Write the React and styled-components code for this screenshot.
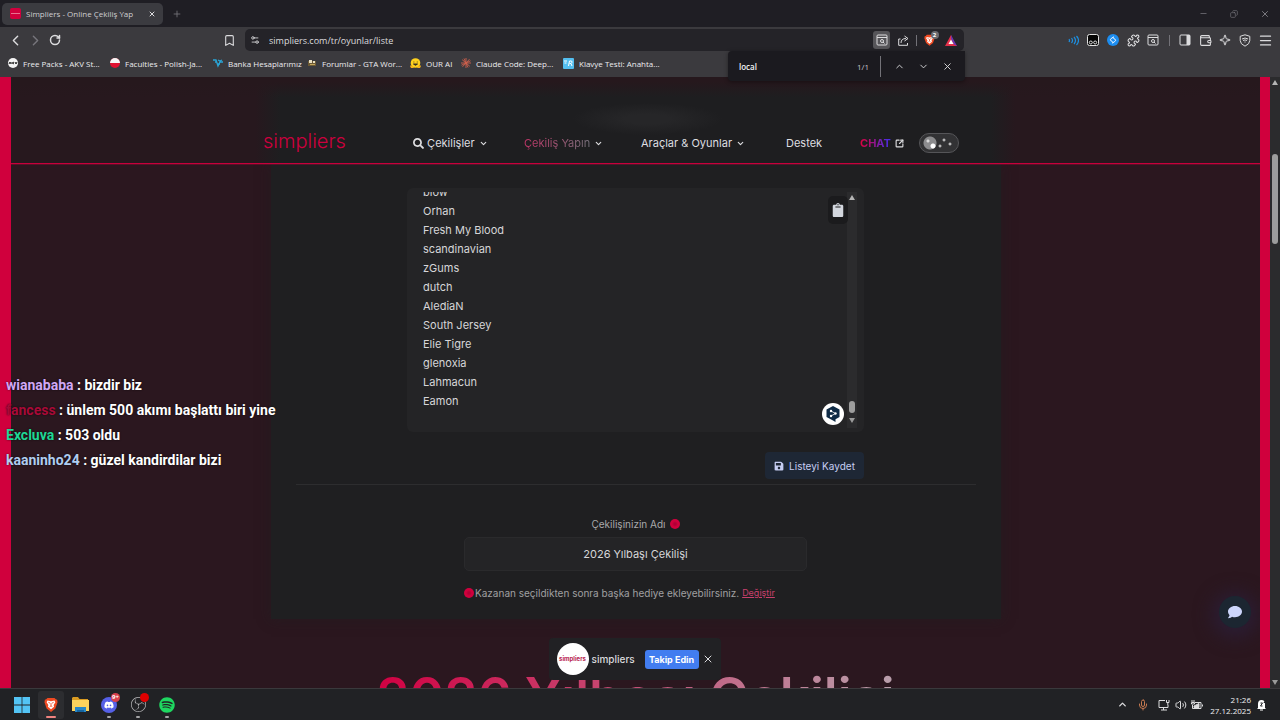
import React, { useLayoutEffect, useRef } from 'react';
import styled, { createGlobalStyle } from 'styled-components';
import {
  ChevronLeft, ChevronRight, ChevronUp, ChevronDown, RotateCw, Bookmark, Plus, X, Minus, Copy,
  Settings2, Puzzle, Wallet, Sparkle, Menu, Mic, Volume2, SquareArrowOutUpRight
} from 'lucide-react';
import { FaSearch, FaSave, FaClipboard, FaComment, FaDiscord, FaSpotify } from 'react-icons/fa';
import { SiObsstudio } from 'react-icons/si';

const GlobalStyle = createGlobalStyle`
  * {
    box-sizing: border-box;
  }
  body {
    margin: 0;
    background: #2b171f;
    font-family: Inter, 'Liberation Sans', sans-serif;
    overflow: hidden;
  }
  button, input, textarea {
    border: 0;
    margin: 0;
    padding: 0;
    background: none;
    color: inherit;
    font: inherit;
    outline: none;
  }
  svg {
    flex: none;
    display: block;
  }
`;

const Desktop = styled.div`
  position: relative;
  display: flex;
  flex-direction: column;
  height: 100vh;
`;

/* browser */

const Browser = styled.header`
  position: relative;
  z-index: 3;
  background: #3b3a3e;
  color: #ececee;
  font-family: 'Open Sans', 'Noto Sans', sans-serif;
  font-size: 8px;
`;

const TabStrip = styled.div`
  display: flex;
  align-items: center;
  height: 27px;
  padding: 0 8px 0 2px;
  background: #1f1e24;
`;

const Tab = styled.div`
  display: flex;
  align-items: center;
  gap: 5px;
  width: 161px;
  height: 22px;
  padding: 0 6px 0 8px;
  border-radius: 5px;
  background: #3b3b40;
  white-space: nowrap;
  span {
    flex: 1;
    color: #cfcfd2;
  }
`;

const Favicon = styled.i`
  display: flex;
  align-items: center;
  justify-content: center;
  width: 11px;
  height: 11px;
  border-radius: 2px;
  background: #d0003d;
  &::after {
    content: '';
    width: 9px;
    height: 1px;
    background: #e8708f;
  }
`;

const IconButton = styled.button`
  display: flex;
  align-items: center;
  justify-content: center;
  flex: none;
  width: ${({ $w }) => $w || 20}px;
  height: 18px;
  border-radius: 3px;
  color: ${({ $color }) => $color || '#dcdcde'};
  background: ${({ $active }) => ($active ? '#565559' : 'transparent')};
`;

const WindowButtons = styled.div`
  display: flex;
  gap: 11px;
  margin-left: auto;
  margin-right: -3px;
`;

const Toolbar = styled.div`
  display: flex;
  align-items: center;
  height: 25px;
  padding: 1px 5px 0;
`;

const BookmarkSlot = styled.div`
  flex: 1;
  display: flex;
  justify-content: flex-end;
  max-width: 180px;
  padding-right: 6px;
`;

const AddressBar = styled.label`
  display: flex;
  align-items: center;
  flex: 1;
  max-width: 719px;
  height: 22px;
  padding: 0 3px 0 0;
  border-radius: 5px;
  background: #242328;
  input {
    flex: 1;
    padding-left: 4px;
    color: #dcdcde;
    font-size: 9px;
  }
`;

const Divider = styled.i`
  width: 1px;
  height: ${({ $h }) => $h || 11}px;
  background: #737278;
`;

const Shield = styled.span`
  position: relative;
  b {
    position: absolute;
    left: 7px;
    top: -3px;
    width: 8px;
    height: 8px;
    border-radius: 4px;
    background: #6b6b70;
    color: #fff;
    font-size: 6px;
    line-height: 8px;
    text-align: center;
  }
`;

const Extensions = styled.div`
  display: flex;
  align-items: center;
  margin-left: auto;
`;

const Bookmarks = styled.nav`
  display: flex;
  align-items: center;
  height: 25px;
  padding: 0 8px 3px;
`;

const BookmarkLink = styled.a`
  display: flex;
  align-items: center;
  gap: 5px;
  width: ${({ $w }) => $w}px;
  color: inherit;
  text-decoration: none;
  white-space: nowrap;
`;

const FindBar = styled.div`
  position: absolute;
  left: 728px;
  top: 51px;
  display: flex;
  align-items: center;
  width: 237px;
  height: 30px;
  padding: 0 6px 0 11px;
  border-radius: 4px 0 4px 4px;
  background: #1b1a1f;
  box-shadow: 0 1px 4px rgba(0, 0, 0, 0.4);
  input {
    flex: 1;
    min-width: 0;
    color: #f2f2f4;
    font-weight: 600;
  }
  span {
    margin-right: 11px;
    color: #c4c4c8;
  }
  ${Divider} {
    margin-right: 6px;
  }
`;

/* page */

const Viewport = styled.div`
  position: relative;
  display: flex;
  flex: 1;
  min-height: 0;
`;

const Page = styled.div`
  position: relative;
  display: flex;
  flex-direction: column;
  align-items: center;
  flex: 1;
  min-width: 0;
  overflow: hidden;
  border: solid #d0003d;
  border-width: 0 10px 0 11px;
  background: #2b171f;
`;

const SiteHeader = styled.header`
  position: relative;
  z-index: 1;
  display: flex;
  justify-content: center;
  align-items: flex-end;
  align-self: stretch;
  flex: none;
  height: 87px;
  padding-bottom: 9px;
  border-bottom: 1px solid #c8003c;
  box-shadow: 0 1px 0 rgba(208, 0, 61, 0.3);
  background:
    radial-gradient(ellipse 75px 16px at calc(50% + 12px) 42px, #262628 30%, transparent),
    linear-gradient(to bottom, #26181d 5px, transparent 20px),
    linear-gradient(to right, #27181e calc(50% - 380px), #1e1e20 calc(50% - 355px), #1e1e20 calc(50% + 355px), #27181e calc(50% + 380px));
`;

const Nav = styled.nav`
  display: grid;
  grid-template-columns: 150px 111px 117px 145px 74px 59px 40px;
  align-items: center;
  width: 745px;
  height: 22px;
  color: #dedee0;
  font-size: 11px;
  white-space: nowrap;
  a {
    display: flex;
    align-items: center;
    color: inherit;
    text-decoration: none;
  }
  a svg:last-child {
    margin-left: 4px;
  }
`;

const Logo = styled.span`
  padding-bottom: 3px;
  color: #cc003e;
  font-size: 20px;
  line-height: 19px;
  font-weight: 300;
`;

const GradientText = styled.span`
  background: linear-gradient(to right, ${({ $from }) => $from}, ${({ $to }) => $to});
  background-clip: text;
  color: transparent;
  font-weight: ${({ $bold }) => ($bold ? 700 : 400)};
`;

const ThemeSwitch = styled.input.attrs({ type: 'checkbox', 'aria-label': 'Karanlık tema' })`
  appearance: none;
  width: 40px;
  height: 20px;
  border: 1px solid #555558;
  border-radius: 10px;
  background:
    radial-gradient(circle at 13px 12px, #fff 2px, transparent 3px),
    radial-gradient(circle at 8px 7px, #d8d8d8 1px, transparent 2px),
    radial-gradient(circle at 10px 9px, #8c8c8e 6px, transparent 7px),
    radial-gradient(circle at 20px 12px, #fff 0, transparent 2px),
    radial-gradient(circle at 24px 6px, #fff 0, transparent 2px),
    radial-gradient(circle at 30px 10px, #fff 0, transparent 2px),
    #323234;
`;

const Card = styled.main`
  display: flex;
  flex-direction: column;
  align-items: center;
  flex: none;
  width: 100%;
  max-width: 730px;
  padding: 24px 25px 18px;
  background: #1f1f21;
  box-shadow: 0 0 12px rgba(31, 31, 33, 0.5);
`;

const ListBox = styled.div`
  position: relative;
  display: flex;
  width: 100%;
  max-width: 457px;
  padding: 4px 7px 4px 16px;
  border-radius: 6px;
  background: #242426;
`;

const Names = styled.textarea`
  flex: 1;
  height: 236px;
  padding-bottom: 17px;
  resize: none;
  overflow: hidden;
  color: #d6d6d8;
  font-size: 11px;
  line-height: 19px;
`;

const Track = styled.div`
  display: flex;
  flex-direction: column;
  align-items: center;
  width: 10px;
  padding: 3px 0;
  background: #2b2b2d;
  &::before, &::after {
    content: '';
    border: 3px solid transparent;
  }
  &::before {
    border-top: 0;
    border-bottom: 5px solid #b4b4b4;
  }
  &::after {
    border-bottom: 0;
    border-top: 5px solid #9a9a9a;
  }
`;

const ListTrack = styled(Track)`
  justify-content: flex-end;
  padding-bottom: 5px;
  &::before {
    margin-bottom: auto;
  }
  &::after {
    margin-top: 5px;
  }
`;

const PageTrack = styled(Track)`
  &::after {
    margin-top: auto;
  }
`;

const Thumb = styled.i`
  width: 6px;
  height: ${({ $h }) => $h}px;
  margin-top: ${({ $offset }) => $offset || 0}px;
  border-radius: 3px;
  background: #9d9d9d;
`;

const CopyButton = styled.button`
  position: absolute;
  right: 16px;
  top: 8px;
  display: flex;
  align-items: center;
  justify-content: center;
  width: 20px;
  height: 28px;
  border-radius: 5px;
  background: #1b1b1d;
  color: #d3d7de;
`;

const Translate = styled.button`
  position: absolute;
  right: 20px;
  bottom: 7px;
  width: 22px;
  height: 22px;
  border-radius: 11px;
  background: #fff;
  display: grid;
  place-items: center;
`;

const SaveButton = styled.button`
  display: flex;
  align-items: center;
  justify-content: center;
  gap: 5px;
  width: 99px;
  height: 27px;
  border-radius: 4px;
  background: #1e2735;
  color: #c6cdf2;
  font-size: 10px;
`;

const SaveRow = styled.div`
  display: flex;
  justify-content: flex-end;
  width: 100%;
  max-width: 457px;
  margin-top: 20px;
`;

const Rule = styled.hr`
  align-self: stretch;
  height: 1px;
  margin: 5px 0 31px;
  border: 0;
  background: #2d2d2f;
`;

const Field = styled.label`
  display: flex;
  flex-direction: column;
  width: 100%;
  max-width: 343px;
  color: #a9a9ab;
  font-size: 10px;
  line-height: 16px;
  span {
    display: flex;
    align-items: center;
    justify-content: center;
    gap: 4px;
  }
  input {
    height: 34px;
    margin-top: 5px;
    border: 1px solid #2a2a2c;
    border-radius: 5px;
    background: #242426;
    color: #d6d6d8;
    font-size: 11px;
    text-align: center;
  }
`;

const Dot = styled.i`
  width: 10px;
  height: 10px;
  border-radius: 5px;
  background: radial-gradient(circle, #b00035 1px, #d0003d 3px);
`;

const Note = styled.p`
  display: flex;
  align-items: center;
  gap: 1px;
  width: 100%;
  max-width: 343px;
  margin: 14px 0 0;
  color: #a0a0a2;
  font-size: 10px;
  line-height: 16px;
  white-space: nowrap;
  a {
    margin-left: 2px;
    color: #c8406d;
    font-size: 9px;
  }
`;

const Title = styled.h1`
  flex: none;
  margin: 48px 0 0;
  background: linear-gradient(to right, #d10042, #b9a0ac);
  background-clip: text;
  color: transparent;
  font-size: 53px;
  line-height: 60px;
  font-weight: 600;
  white-space: nowrap;
`;

const Toast = styled.aside`
  position: absolute;
  left: 50%;
  bottom: 8px;
  display: flex;
  align-items: center;
  width: 172px;
  height: 42px;
  margin-left: -87px;
  padding: 0 4px 0 8px;
  border-radius: 4px;
  background: #212124;
  color: #dadadc;
  font-size: 10px;
  font-weight: 500;
  > span {
    flex: 1;
    padding-left: 3px;
  }
`;

const Avatar = styled.b`
  width: 32px;
  height: 32px;
  border-radius: 16px;
  background: #fff;
  color: #b81c50;
  font-size: 6px;
  line-height: 32px;
  text-align: center;
`;

const FollowButton = styled.button`
  width: 54px;
  height: 19px;
  border-radius: 3px;
  background: #427df0;
  color: #fff;
  font-size: 9px;
  font-weight: 700;
  white-space: nowrap;
`;

const SupportButton = styled.button`
  position: absolute;
  right: 9px;
  bottom: 60px;
  display: grid;
  place-items: center;
  width: 32px;
  height: 32px;
  border-radius: 16px;
  background: #1c2631;
  color: #cdd5fb;
  box-shadow: 0 3px 18px 7px #2b1d33;
`;

const StreamChat = styled.ul`
  position: absolute;
  left: 6px;
  top: 296px;
  z-index: 2;
  margin: 0;
  padding: 0;
  list-style: none;
  color: #fff;
  font-family: Roboto, sans-serif;
  font-size: 14px;
  font-weight: 700;
  line-height: 25px;
  text-shadow: 0 0 2px rgba(0, 0, 0, 0.7);
  white-space: nowrap;
`;

const Nick = styled.span`
  color: ${({ $color }) => $color};
`;

/* taskbar */

const Taskbar = styled.footer`
  display: flex;
  align-items: center;
  flex: none;
  height: 32px;
  padding: 0 12px 0 9px;
  border-top: 1px solid #3a393c;
  background: #212225;
  color: #f0f0f2;
  font-family: 'Open Sans', 'Noto Sans', sans-serif;
  font-size: 8px;
`;

const AppButton = styled.button`
  position: relative;
  display: grid;
  place-items: center;
  width: 26px;
  height: 28px;
  margin-right: 3px;
  border-radius: 3px;
  color: ${({ $color }) => $color};
  background: ${({ $active }) => ($active ? '#2c2d30' : 'transparent')};
  &::after {
    content: '';
    position: absolute;
    bottom: 1px;
    width: ${({ $active }) => ($active ? 10 : 4)}px;
    height: 2px;
    border-radius: 1px;
    background: ${({ $active, $running }) => ($active ? '#f0837f' : $running ? '#a5a5a7' : 'transparent')};
  }
`;

const Badge = styled.b`
  position: absolute;
  right: 2px;
  top: 2px;
  width: 9px;
  height: 9px;
  border-radius: 5px;
  background: ${({ $color }) => $color};
  color: #fff;
  font-size: 6px;
  line-height: 9px;
`;

const Tray = styled.div`
  display: flex;
  align-items: center;
  margin-left: auto;
`;

const Clock = styled.time`
  width: 44px;
  margin: 0 3px 0 0;
  line-height: 11px;
  text-align: right;
`;

const names = [
  'blow', 'Orhan', 'Fresh My Blood', 'scandinavian', 'zGums', 'dutch', 'AlediaN',
  'South Jersey', 'Elie Tigre', 'glenoxia', 'Lahmacun', 'Eamon'
];

const messages = [
  { nick: 'wianababa', color: '#d0a8f5', text: 'bizdir biz' },
  { nick: 'fancess', color: '#a80a38', text: 'ünlem 500 akımı başlattı biri yine' },
  { nick: 'Excluva', color: '#1fd795', text: '503 oldu' },
  { nick: 'kaaninho24', color: '#b0cdf0', text: 'güzel kandirdilar bizi' }
];

const AkvIcon = () => (
  <svg width="10" height="10" viewBox="0 0 10 10">
    <circle cx="5" cy="5" r="5" fill="#f4f4f4" />
    <path d="M1 6l1-2 1 2M4 4v2M6 4L4.500 5 6 6M7 4l1 2 1-2" stroke="#222" fill="none" />
  </svg>
);

const PolishIcon = () => (
  <svg width="10" height="10" viewBox="0 0 10 10">
    <circle cx="5" cy="5" r="5" fill="#e01030" />
    <path d="M0 5a5 5 0 0 1 10 0z" fill="#f6f6f6" />
  </svg>
);

const BankIcon = () => (
  <svg width="10" height="10" viewBox="0 0 10 10" stroke="#2aa5d6" strokeWidth="1.300" fill="none">
    <path d="M0 2h3l2 6 2-4h3M2 4h2M5 2l2 1 2-1M4 6h3" />
  </svg>
);

const GtaIcon = () => (
  <svg width="10" height="10" viewBox="0 0 10 10">
    <path d="M1 3h8v5H1z" fill="#6d5a35" />
    <path d="M2 2h3v3H2zM6 3h2v2H6z" fill="#e9dfc2" />
    <path d="M3 6h5v1H3z" fill="#c3a55c" />
  </svg>
);

const HugIcon = () => (
  <svg width="11" height="11" viewBox="0 0 11 11">
    <circle cx="5.500" cy="5" r="4.800" fill="#ffd21e" />
    <path d="M0 8c1-2 3 0 4 2H1zM11 8c-1-2-3 0-4 2h3z" fill="#f5b21a" />
    <path d="M3.500 4h.8M6.800 4h.8M3.500 6q2 2.500 4 0z" stroke="#3a3320" fill="#3a3320" />
  </svg>
);

const ClaudeIcon = () => (
  <svg width="10" height="10" viewBox="0 0 10 10" stroke="#d0604c" strokeWidth=".9">
    <path d="M5 0v10M0 5h10M1.200 1.700l7.600 6.600M8.500 1.200l-7 7.600M3 .5l4 9M.5 7.200l9-4.400" />
  </svg>
);

const KeyboardIcon = () => (
  <svg width="11" height="11" viewBox="0 0 11 11">
    <rect width="11" height="11" rx="1" fill="#54bff0" />
    <path d="M1 3h3M1.500 5h2M5.500 8l1-5h2q1.500 1-.5 2.500H6.500M8 5.500L9 8" stroke="#fff" fill="none" />
  </svg>
);

const PageSearchIcon = () => (
  <svg width="12" height="12" viewBox="0 0 12 12" fill="none" stroke="currentColor">
    <rect x="1" y="1" width="10" height="10" rx="1" />
    <path d="M1 3.500h10M7 8l1.500 1.500" />
    <circle cx="6" cy="7" r="1.500" />
  </svg>
);

const ShareIcon = () => (
  <svg width="11" height="11" viewBox="0 0 11 11" fill="none" stroke="currentColor">
    <path d="M2.500 4H.7v6.300h8.800V8M3 8q0-4.500 5-4.500M6.500 1L10 3.500 6.500 6" />
  </svg>
);

const SoundIcon = () => (
  <svg width="11" height="11" viewBox="0 0 11 11" fill="none" stroke="#1d8fe0" strokeWidth="1.200">
    <path d="M1 4q1 1.500 0 3M3.500 3q2 2.500 0 5M6 2q3 3.500 0 7M8.500 1q4 4.500 0 9" />
  </svg>
);

const MonkeyIcon = () => (
  <svg width="12" height="12" viewBox="0 0 12 12">
    <rect x=".5" y=".5" width="11" height="11" rx="2" fill="#050505" stroke="#e2e2e2" />
    <circle cx="3.800" cy="8.500" r="1.500" fill="none" stroke="#e2e2e2" />
    <circle cx="8.200" cy="8.500" r="1.500" fill="none" stroke="#e2e2e2" />
  </svg>
);

const ShazamIcon = () => (
  <svg width="12" height="12" viewBox="0 0 12 12">
    <circle cx="6" cy="6" r="6" fill="#1c8df0" />
    <path
      d="M7 2.800L4.300 4.400q-1.800 1.300 0 2.700l1.500.9M5 9.200l2.700-1.600q1.800-1.300 0-2.700L6.200 4"
      fill="none"
      stroke="#fff"
    />
  </svg>
);

const RewardsIcon = () => (
  <svg width="12" height="11" viewBox="0 0 12 11">
    <path d="M6 0L0 11h12L9.500 8z" fill="#e3304a" />
    <path d="M6 0l6 11-3-1.500L6 4z" fill="#6a35b0" />
    <path d="M6 4.500L8.500 9h-5z" fill="#fff" />
  </svg>
);

const PanelIcon = () => (
  <svg width="12" height="12" viewBox="0 0 12 12">
    <rect x="1" y="1" width="10" height="10" rx="1" fill="none" stroke="currentColor" />
    <path d="M7.500 1H11v10H7.500z" fill="currentColor" />
  </svg>
);

const VpnIcon = () => (
  <svg width="12" height="13" viewBox="0 0 12 13" fill="none" stroke="currentColor">
    <path d="M6 .8l4.800 1.500v4.200q0 3.500-4.800 5.700Q1.200 10 1.200 6.500V2.300z" />
    <path d="M3 5q3-2 6 0M4 6.500q2-1.200 4 0M5.500 8h1" />
  </svg>
);

const DeeplIcon = () => (
  <svg width="14" height="16" viewBox="0 0 14 16">
    <path d="M7 0l6.500 3.500v7.500L9.500 13.200V16L7 14.500.5 11V3.500z" fill="#0f2b46" />
    <path d="M5 5l4.500 2.500L5 10" stroke="#fff" strokeWidth=".8" fill="none" />
    <circle cx="5" cy="5" r="1.200" fill="#fff" />
    <circle cx="9.500" cy="7.500" r="1.200" fill="#fff" />
    <circle cx="5" cy="10" r="1.200" fill="#fff" />
  </svg>
);

const WindowsIcon = () => (
  <svg width="16" height="16" viewBox="0 0 16 16" fill="#53c4f5">
    <path d="M0 0h7.600v7.600H0zM8.400 0H16v7.600H8.400zM0 8.400h7.600V16H0zM8.400 8.400H16V16H8.400z" />
  </svg>
);

const BraveIcon = ({ size }) => (
  <svg width={size} height={size + 1} viewBox="0 0 16 17">
    <path d="M4 1h8l1.500 1.500L15 3l.5 3-2.500 7-5 4-5-4L.5 6 1 3l1.500-.5z" fill="#ee4a22" />
    <path d="M4 4l4 .8L12 4l1 2-2 3 .5 2L8 14l-3.500-3L5 9 3 6z" fill="#fff" />
    <path d="M5 6l2 1M11 6L9 7M8 7v3M6.500 11L8 10l1.500 1" stroke="#ee4a22" fill="none" />
  </svg>
);

const FolderIcon = () => (
  <svg width="17" height="15" viewBox="0 0 17 15">
    <path d="M1 0h5l1.500 2H16v4H0V1z" fill="#d99b22" />
    <path d="M0 3h17v11H0z" fill="#fbd35d" />
    <path d="M3 15v-5h11v5z" fill="#2787c8" />
    <path d="M5 15v-2h7v2z" fill="#1565a0" />
  </svg>
);

const DiscordIcon = () => (
  <svg width="16" height="16" viewBox="0 0 16 16">
    <circle cx="8" cy="8" r="8" fill="#5560e6" />
    <FaDiscord x="3" y="3" size={10} color="#fff" />
  </svg>
);

const NetworkIcon = () => (
  <svg width="12" height="12" viewBox="0 0 12 12" fill="none" stroke="currentColor">
    <path d="M7 1.500H1v7h9V6M3 11h6M5.500 8.500V11M8.500 1v2.500h2.500V1M9.800 3.500V6" />
  </svg>
);

const BatteryIcon = () => (
  <svg width="12" height="10" viewBox="0 0 12 10" fill="none" stroke="currentColor">
    <path d="M4 2.500h6v6H1.500V5M11.500 4.500v2M1 0v2M3 0v2M.5 2.500h3v1.500h-3z" />
    <path d="M3 7.500V6l5-2.500v4z" fill="currentColor" />
  </svg>
);

const BellIcon = () => (
  <svg width="11" height="12" viewBox="0 0 11 12">
    <path d="M2 9V5q0-4 3.500-4T9 5v4l1 1H1z" fill="#fff" />
    <path d="M4 11h3" stroke="#fff" />
    <path d="M4.500 4h2l-2 3h2M8 1h2.500L8 3.500h2.500" stroke="#212225" fill="none" />
  </svg>
);

const bookmarks = [
  { label: 'Free Packs - AKV St...', w: 102, Icon: AkvIcon },
  { label: 'Faculties - Polish-Ja...', w: 103, Icon: PolishIcon },
  { label: 'Banka Hesaplarımız', w: 94, Icon: BankIcon },
  { label: 'Forumlar - GTA Wor...', w: 103, Icon: GtaIcon },
  { label: 'OUR AI', w: 51, Icon: HugIcon },
  { label: 'Claude Code: Deep...', w: 102, Icon: ClaudeIcon },
  { label: 'Klavye Testi: Anahta...', w: 100, Icon: KeyboardIcon }
];

const BrowserChrome = () => (
  <Browser>
    <TabStrip>
      <Tab>
        <Favicon />
        <span>Simpliers - Online Çekiliş Yap</span>
        <IconButton $w={10} aria-label="Sekmeyi kapat"><X size={8} strokeWidth={3} /></IconButton>
      </Tab>
      <IconButton $w={28} $color="#77767c" aria-label="Yeni sekme"><Plus size={10} /></IconButton>
      <WindowButtons>
        <IconButton $color="#77767c" aria-label="Küçült"><Minus size={9} /></IconButton>
        <IconButton $color="#77767c" aria-label="Geri yükle"><Copy size={8} transform="scale(-1 1)" /></IconButton>
        <IconButton $color="#8b8a90" aria-label="Kapat"><X size={10} /></IconButton>
      </WindowButtons>
    </TabStrip>
    <Toolbar>
      <IconButton aria-label="Geri"><ChevronLeft size={17} /></IconButton>
      <IconButton $color="#77767c" aria-label="İleri"><ChevronRight size={17} /></IconButton>
      <IconButton aria-label="Yenile"><RotateCw size={12} strokeWidth={3} /></IconButton>
      <BookmarkSlot>
        <IconButton aria-label="Yer işareti"><Bookmark size={13} /></IconButton>
      </BookmarkSlot>
      <AddressBar>
        <IconButton as="span"><Settings2 size={10} /></IconButton>
        <input aria-label="Adres" defaultValue="simpliers.com/tr/oyunlar/liste" />
        <IconButton $active $w={17} aria-label="Sayfada bul"><PageSearchIcon /></IconButton>
        <IconButton $w={26} aria-label="Paylaş"><ShareIcon /></IconButton>
        <Divider />
        <IconButton $w={24} aria-label="Brave Shields">
          <Shield><BraveIcon size={11} /><b>2</b></Shield>
        </IconButton>
        <IconButton aria-label="Rewards"><RewardsIcon /></IconButton>
      </AddressBar>
      <Extensions>
        <IconButton aria-label="Ses"><SoundIcon /></IconButton>
        <IconButton aria-label="Tampermonkey"><MonkeyIcon /></IconButton>
        <IconButton aria-label="Shazam"><ShazamIcon /></IconButton>
        <IconButton aria-label="Uzantılar"><Puzzle size={13} /></IconButton>
        <IconButton aria-label="Ara"><PageSearchIcon /></IconButton>
        <IconButton $w={12} as="span"><Divider /></IconButton>
        <IconButton aria-label="Kenar çubuğu"><PanelIcon /></IconButton>
        <IconButton aria-label="Cüzdan"><Wallet size={13} /></IconButton>
        <IconButton aria-label="Leo"><Sparkle size={12} /></IconButton>
        <IconButton aria-label="VPN"><VpnIcon /></IconButton>
        <IconButton aria-label="Menü"><Menu size={15} /></IconButton>
      </Extensions>
    </Toolbar>
    <Bookmarks>
      {bookmarks.map(({ label, w, Icon }) => (
        <BookmarkLink key={label} href="#" $w={w}><Icon />{label}</BookmarkLink>
      ))}
    </Bookmarks>
    <FindBar>
      <input aria-label="Bul" defaultValue="local" />
      <span>1/1</span>
      <Divider $h={21} />
      <IconButton $w={24} aria-label="Önceki"><ChevronUp size={11} /></IconButton>
      <IconButton $w={24} aria-label="Sonraki"><ChevronDown size={11} /></IconButton>
      <IconButton $w={24} aria-label="Bulmayı kapat"><X size={11} /></IconButton>
    </FindBar>
  </Browser>
);

const NameList = () => {
  const ref = useRef(null);

  useLayoutEffect(() => {
    ref.current.scrollTop = ref.current.scrollHeight;
  }, []);

  return (
    <ListBox>
      <Names ref={ref} aria-label="Katılımcı listesi" spellCheck={false} defaultValue={names.join('\n')} />
      <ListTrack><Thumb $h={12} /></ListTrack>
      <CopyButton aria-label="Kopyala"><FaClipboard size={14} /></CopyButton>
      <Translate aria-label="Çevir"><DeeplIcon /></Translate>
    </ListBox>
  );
};

const Caret = () => <ChevronDown size={9} strokeWidth={3} />;

const App = () => (
  <Desktop>
    <GlobalStyle />
    <BrowserChrome />
    <Viewport>
      <Page>
        <SiteHeader>
          <Nav>
            <a href="#"><Logo>simpliers</Logo></a>
            <a href="#"><FaSearch size={11} />&nbsp;Çekilişler<Caret /></a>
            <a href="#"><GradientText $from="#c13568" $to="#77727c">Çekiliş Yapın</GradientText><Caret /></a>
            <a href="#">Araçlar &amp; Oyunlar<Caret /></a>
            <a href="#">Destek</a>
            <a href="#">
              <GradientText $bold $from="#e0003d" $to="#4030f0">CHAT</GradientText>
              <SquareArrowOutUpRight size={9} strokeWidth={3} />
            </a>
            <ThemeSwitch />
          </Nav>
        </SiteHeader>
        <Card>
          <NameList />
          <SaveRow>
            <SaveButton><FaSave size={10} />Listeyi Kaydet</SaveButton>
          </SaveRow>
          <Rule />
          <Field>
            <span>Çekilişinizin Adı <Dot /></span>
            <input defaultValue="2026 Yılbaşı Çekilişi" />
          </Field>
          <Note><Dot />Kazanan seçildikten sonra başka hediye ekleyebilirsiniz. <a href="#">Değiştir</a></Note>
        </Card>
        <Title>2026 Yılbaşı Çekilişi</Title>
        <Toast>
          <Avatar>simpliers</Avatar>
          <span>simpliers</span>
          <FollowButton>Takip Edin</FollowButton>
          <IconButton $w={18} aria-label="Kapat"><X size={12} /></IconButton>
        </Toast>
        <SupportButton aria-label="Destek sohbeti"><FaComment size={14} /></SupportButton>
      </Page>
      <PageTrack><Thumb $h={90} $offset={69} /></PageTrack>
      <StreamChat>
        {messages.map(({ nick, color, text }) => (
          <li key={nick}><Nick $color={color}>{nick}</Nick> : {text}</li>
        ))}
      </StreamChat>
    </Viewport>
    <Taskbar>
      <AppButton aria-label="Başlat"><WindowsIcon /></AppButton>
      <AppButton $active aria-label="Brave"><BraveIcon size={14} /></AppButton>
      <AppButton aria-label="Dosya Gezgini"><FolderIcon /></AppButton>
      <AppButton $running aria-label="Discord"><DiscordIcon /><Badge $color="#d8404c">9+</Badge></AppButton>
      <AppButton $running $color="#b9b9bb" aria-label="OBS Studio"><SiObsstudio size={15} /><Badge $color="#e00000" /></AppButton>
      <AppButton $running $color="#1ed760" aria-label="Spotify"><FaSpotify size={16} /></AppButton>
      <Tray>
        <IconButton aria-label="Gizli simgeler"><ChevronUp size={11} strokeWidth={3} /></IconButton>
        <IconButton $color="#c87a50" $w={22} aria-label="Mikrofon"><Mic size={12} /></IconButton>
        <IconButton aria-label="Ağ"><NetworkIcon /></IconButton>
        <IconButton $w={13} aria-label="Ses düzeyi"><Volume2 size={12} /></IconButton>
        <IconButton aria-label="Pil"><BatteryIcon /></IconButton>
        <Clock>21:26<br />27.12.2025</Clock>
        <IconButton $w={14} aria-label="Bildirimler"><BellIcon /></IconButton>
      </Tray>
    </Taskbar>
  </Desktop>
);

export default App;
